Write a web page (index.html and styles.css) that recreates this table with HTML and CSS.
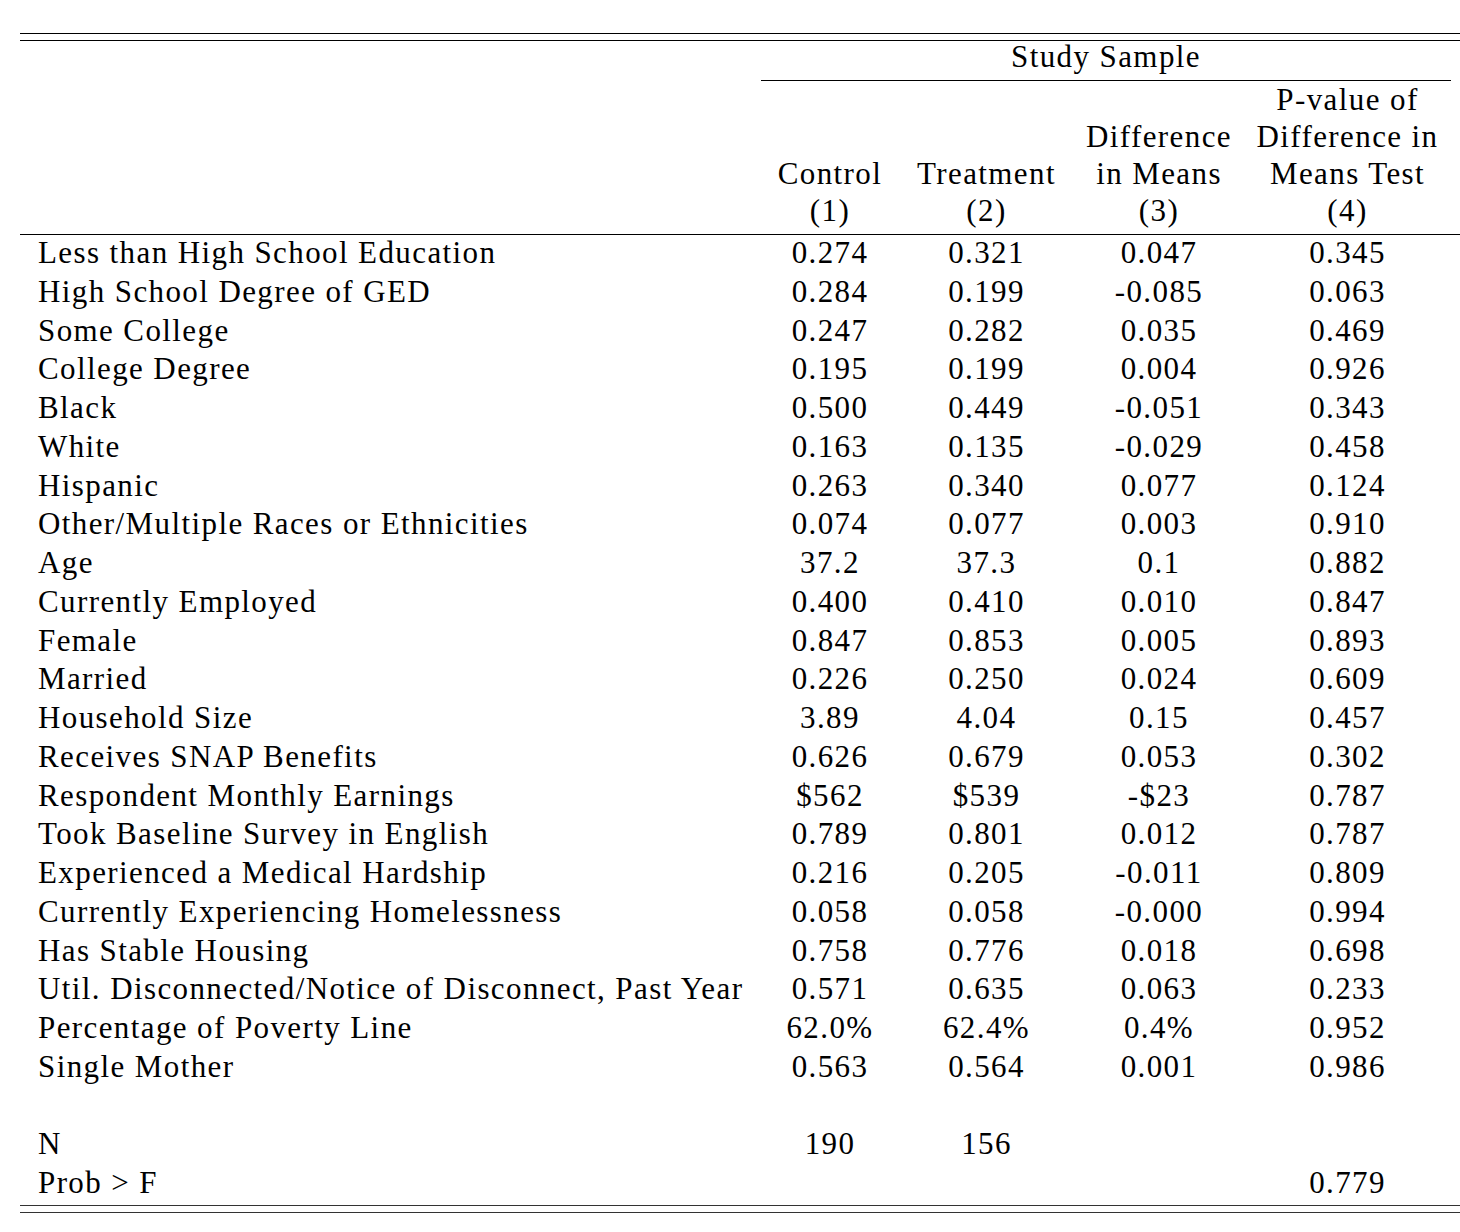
FILE: index.html
```html
<!DOCTYPE html>
<html lang="en">
<head>
<meta charset="utf-8">
<title>Study Sample Balance Table</title>
<link rel="stylesheet" href="styles.css">
</head>
<body>
<div class="page">
  <div class="rule-double"></div>
  <table class="tbl">
    <colgroup>
      <col class="c-label"><col class="c1"><col class="c2"><col class="c3"><col class="c4"><col class="c-pad">
    </colgroup>
    <thead>
      <tr class="group-row"><th></th><th colspan="4" class="group">Study Sample</th><th></th></tr>
      <tr class="head-row">
        <th></th>
        <th>Control<br>(1)</th>
        <th>Treatment<br>(2)</th>
        <th>Difference<br>in Means<br>(3)</th>
        <th>P-value of<br>Difference in<br>Means Test<br>(4)</th>
        <th></th>
      </tr>
    </thead>
    <tbody>
      <tr><td class="lbl">Less than High School Education</td><td>0.274</td><td>0.321</td><td>0.047</td><td>0.345</td><td></td></tr>
      <tr><td class="lbl">High School Degree of GED</td><td>0.284</td><td>0.199</td><td>-0.085</td><td>0.063</td><td></td></tr>
      <tr><td class="lbl">Some College</td><td>0.247</td><td>0.282</td><td>0.035</td><td>0.469</td><td></td></tr>
      <tr><td class="lbl">College Degree</td><td>0.195</td><td>0.199</td><td>0.004</td><td>0.926</td><td></td></tr>
      <tr><td class="lbl">Black</td><td>0.500</td><td>0.449</td><td>-0.051</td><td>0.343</td><td></td></tr>
      <tr><td class="lbl">White</td><td>0.163</td><td>0.135</td><td>-0.029</td><td>0.458</td><td></td></tr>
      <tr><td class="lbl">Hispanic</td><td>0.263</td><td>0.340</td><td>0.077</td><td>0.124</td><td></td></tr>
      <tr><td class="lbl">Other/Multiple Races or Ethnicities</td><td>0.074</td><td>0.077</td><td>0.003</td><td>0.910</td><td></td></tr>
      <tr><td class="lbl">Age</td><td>37.2</td><td>37.3</td><td>0.1</td><td>0.882</td><td></td></tr>
      <tr><td class="lbl">Currently Employed</td><td>0.400</td><td>0.410</td><td>0.010</td><td>0.847</td><td></td></tr>
      <tr><td class="lbl">Female</td><td>0.847</td><td>0.853</td><td>0.005</td><td>0.893</td><td></td></tr>
      <tr><td class="lbl">Married</td><td>0.226</td><td>0.250</td><td>0.024</td><td>0.609</td><td></td></tr>
      <tr><td class="lbl">Household Size</td><td>3.89</td><td>4.04</td><td>0.15</td><td>0.457</td><td></td></tr>
      <tr><td class="lbl">Receives SNAP Benefits</td><td>0.626</td><td>0.679</td><td>0.053</td><td>0.302</td><td></td></tr>
      <tr><td class="lbl">Respondent Monthly Earnings</td><td>$562</td><td>$539</td><td>-$23</td><td>0.787</td><td></td></tr>
      <tr><td class="lbl">Took Baseline Survey in English</td><td>0.789</td><td>0.801</td><td>0.012</td><td>0.787</td><td></td></tr>
      <tr><td class="lbl">Experienced a Medical Hardship</td><td>0.216</td><td>0.205</td><td>-0.011</td><td>0.809</td><td></td></tr>
      <tr><td class="lbl">Currently Experiencing Homelessness</td><td>0.058</td><td>0.058</td><td>-0.000</td><td>0.994</td><td></td></tr>
      <tr><td class="lbl">Has Stable Housing</td><td>0.758</td><td>0.776</td><td>0.018</td><td>0.698</td><td></td></tr>
      <tr><td class="lbl">Util. Disconnected/Notice of Disconnect, Past Year</td><td>0.571</td><td>0.635</td><td>0.063</td><td>0.233</td><td></td></tr>
      <tr><td class="lbl">Percentage of Poverty Line</td><td>62.0%</td><td>62.4%</td><td>0.4%</td><td>0.952</td><td></td></tr>
      <tr><td class="lbl">Single Mother</td><td>0.563</td><td>0.564</td><td>0.001</td><td>0.986</td><td></td></tr>
      <tr class="spacer"><td class="lbl"></td><td></td><td></td><td></td><td></td><td></td></tr>
      <tr><td class="lbl">N</td><td>190</td><td>156</td><td></td><td></td><td></td></tr>
      <tr><td class="lbl">Prob &gt; F</td><td></td><td></td><td></td><td>0.779</td><td></td></tr>
    </tbody>
  </table>
  <div class="rule-double bottom"></div>
</div>
</body>
</html>
```
FILE: styles.css
```css
html, body {
  margin: 0;
  background: #ffffff;
}

body {
  color: #000000;
  font-family: "Liberation Serif", "Times New Roman", serif;
  font-size: 31px;
  letter-spacing: 1.4px;
}

.page {
  padding: 33px 0 0 20px;
}

.rule-double {
  width: 1440px;
  height: 6px;
  border-top: 1px solid #000000;
  border-bottom: 1px solid #000000;
}

.rule-double.bottom {
  margin-top: 1px;
  border-color: #333333;
}

.tbl {
  width: 1440px;
  table-layout: fixed;
  border-collapse: separate;
  border-spacing: 0;
}

.c-label { width: 741px; }
.c1 { width: 138px; }
.c2 { width: 175px; }
.c3 { width: 170px; }
.c4 { width: 207px; }
.c-pad { width: 9px; }

.tbl th,
.tbl td {
  padding: 0;
  font-weight: normal;
  text-align: center;
  white-space: nowrap;
}

.group-row th {
  line-height: 31px;
  padding-bottom: 8px;
  vertical-align: top;
}

.group-row .group {
  border-bottom: 1px solid #000000;
}

.head-row th {
  line-height: 37px;
  padding-bottom: 5px;
  vertical-align: bottom;
  border-bottom: 1px solid #000000;
}

.tbl td {
  line-height: 36px;
  padding-bottom: 2.76px;
  vertical-align: top;
}

.tbl td.lbl {
  text-align: left;
  padding-left: 18px;
}

.spacer td {
  height: 36px;
}
```
